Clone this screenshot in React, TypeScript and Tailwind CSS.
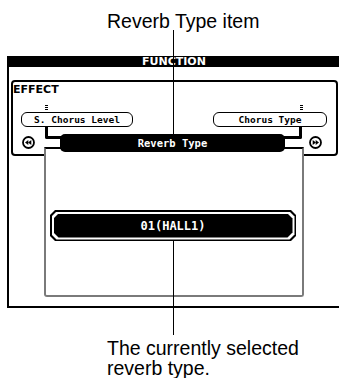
import React from "react";

const sans = "font-['Liberation_Sans',Arial,sans-serif]";
const lcd = "font-['DejaVu_Sans_Mono',monospace] font-bold";
const lcdSans = "font-['DejaVu_Sans',sans-serif] font-bold";

const Marker: React.FC = () => (
  <div className="flex flex-col gap-px w-[3px]">
    <div className="h-px bg-black" />
    <div className="h-px bg-black" />
    <div className="h-px bg-black" />
  </div>
);

const ArrowButton: React.FC<{ dir: "left" | "right" }> = ({ dir }) => (
  <svg width="13" height="13" viewBox="0 0 13 13">
    <circle cx="6.5" cy="6.5" r="5.5" fill="white" stroke="black" strokeWidth="1.8" />
    {dir === "left" ? (
      <g fill="black">
        <polygon points="3,6.5 6.3,4 6.3,9" />
        <polygon points="6,6.5 9.3,4 9.3,9" />
      </g>
    ) : (
      <g fill="black">
        <polygon points="10,6.5 6.7,4 6.7,9" />
        <polygon points="7,6.5 3.7,4 3.7,9" />
      </g>
    )}
  </svg>
);

const octagon =
  "[clip-path:polygon(5px_0,calc(100%_-_5px)_0,100%_5px,100%_calc(100%_-_5px),calc(100%_-_5px)_100%,5px_100%,0_calc(100%_-_5px),0_5px)]";

export default function App() {
  return (
    <div className={`relative w-[339px] h-[378px] overflow-hidden bg-white text-black ${sans}`}>
      {/* callout title */}
      <p className="h-[56px] pl-[107px] pt-[11px] text-[19.5px] leading-[21px]">Reverb Type item</p>

      {/* LCD panel */}
      <div className="ml-[7px] w-[332px] h-[252px] border-l-2 border-b-2 border-black flex flex-col">
        <div className={`h-[11px] bg-black text-white flex items-center justify-center text-[11px] leading-none ${lcdSans}`}>
          FUNCTION
        </div>

        {/* EFFECT box */}
        <div className="relative mt-[13px] ml-[2px] w-[327px] h-[76px] shrink-0 border-2 border-black rounded-[4px]">
          <div className={`pt-[2px] h-[14px] text-[11px] leading-[12px] ${lcdSans}`}>EFFECT</div>
          <div className="mt-[9px] h-[5px] flex justify-between pl-[32px] pr-[33px]">
            <Marker />
            <Marker />
          </div>
          <div className="mt-[2px] h-[15px] flex justify-between pl-[8px] pr-[9px]">
            <div className={`w-[112px] h-[15px] border-[1.5px] border-black rounded-[6px] flex items-center justify-center text-[9.5px] leading-none ${lcd}`}>
              S. Chorus Level
            </div>
            <div className={`w-[114px] h-[15px] border-[1.5px] border-black rounded-[6px] flex items-center justify-center text-[9.5px] leading-none ${lcd}`}>
              Chorus Type
            </div>
          </div>
          <div className="mt-[9px] h-[13px] flex justify-between pl-[9px] pr-[14px]">
            <ArrowButton dir="left" />
            <ArrowButton dir="right" />
          </div>

          {/* connectors from items to the selected bar */}
          <div className="absolute left-[32px] top-[45px] w-[17px] h-[12px] border-l-[3px] border-b-[3px] border-black rounded-bl-[2px]" />
          <div className="absolute left-[271px] top-[45px] w-[18px] h-[12px] border-r-[3px] border-b-[3px] border-black rounded-br-[2px]" />
        </div>

        {/* Reverb Type window */}
        <div className="relative z-10 -mt-[9px] ml-[35px] w-[260px] h-[150px] bg-white border-2 border-[#7a7a7a] border-t-black rounded-b-[3px]">
          <div className={`absolute -top-[15px] left-[14px] w-[225px] h-[18px] bg-black rounded-[5px] text-white flex items-center justify-center text-[10.5px] leading-none ${lcd}`}>
            Reverb Type
          </div>

          <div className={`mt-[61px] ml-[4px] w-[246px] h-[31px] bg-black p-[1.5px] ${octagon}`}>
            <div className={`w-full h-full bg-white p-[2px] ${octagon}`}>
              <div className={`w-full h-full bg-black text-white flex items-center justify-center text-[12px] leading-none ${lcd} ${octagon}`}>
                01(HALL1)
              </div>
            </div>
          </div>
        </div>
      </div>

      {/* callout text */}
      <p className="mt-[30px] pl-[107px] text-[19.5px] leading-[20px]">
        The currently selected
        <br />
        reverb type.
      </p>

      {/* callout leader lines */}
      <div className="absolute left-[173px] top-[30px] w-px h-[104px] bg-black z-20" />
      <div className="absolute left-[173px] top-[241px] w-px h-[94px] bg-black z-20" />
    </div>
  );
}
